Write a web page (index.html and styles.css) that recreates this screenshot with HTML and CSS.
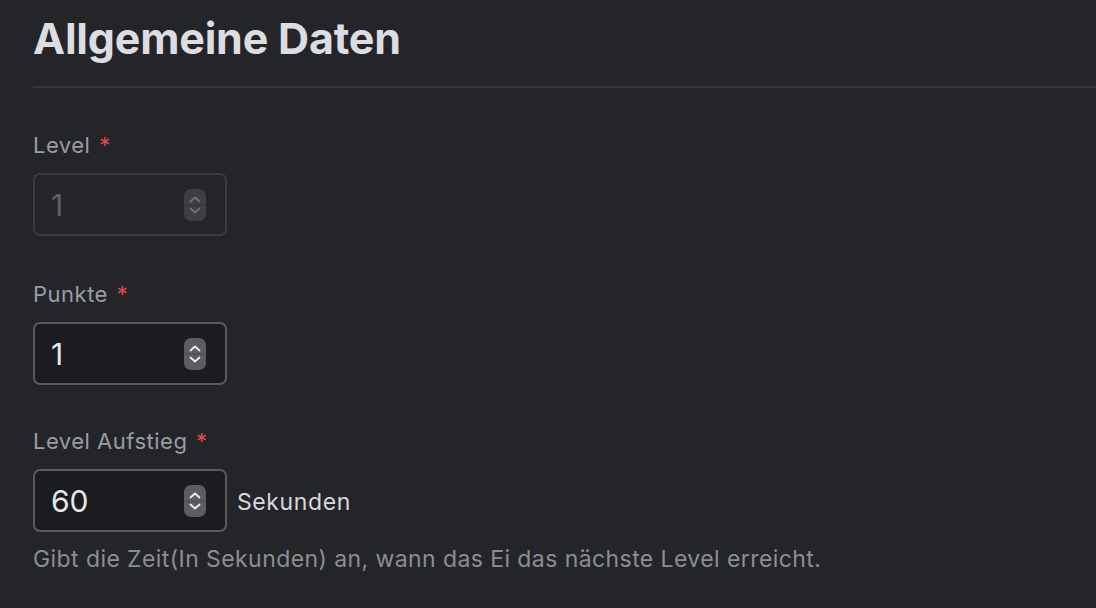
FILE: index.html
```html
<!DOCTYPE html>
<html lang="de">
<head>
    <meta charset="UTF-8">
    <meta name="viewport" content="width=device-width, initial-scale=1.0">
    <title>Allgemeine Daten</title>
    <link rel="stylesheet" href="styles.css">
</head>
<body>
    <main class="panel">
        <h1 class="panel-title">Allgemeine Daten</h1>

        <div class="field">
            <label class="field-label" for="level">Level <span class="req">*</span></label>
            <div class="field-row">
                <div class="num-input disabled">
                    <input type="number" id="level" value="1" disabled>
                    <span class="spinner">
                        <svg width="22" height="32" viewBox="0 0 22 32"><rect x="0" y="0" width="22" height="32" rx="7"/><line class="split" x1="0" y1="16" x2="22" y2="16"/><path d="M6.5 12.5 L11 8.5 L15.5 12.5 M6.5 19.5 L11 23.5 L15.5 19.5"/></svg>
                    </span>
                </div>
            </div>
        </div>

        <div class="field">
            <label class="field-label" for="punkte">Punkte <span class="req">*</span></label>
            <div class="field-row">
                <div class="num-input">
                    <input type="number" id="punkte" value="1">
                    <span class="spinner">
                        <svg width="22" height="32" viewBox="0 0 22 32"><rect x="0" y="0" width="22" height="32" rx="7"/><line class="split" x1="0" y1="16" x2="22" y2="16"/><path d="M6.5 12.5 L11 8.5 L15.5 12.5 M6.5 19.5 L11 23.5 L15.5 19.5"/></svg>
                    </span>
                </div>
            </div>
        </div>

        <div class="field">
            <label class="field-label" for="aufstieg">Level Aufstieg <span class="req">*</span></label>
            <div class="field-row">
                <div class="num-input">
                    <input type="number" id="aufstieg" value="60">
                    <span class="spinner">
                        <svg width="22" height="32" viewBox="0 0 22 32"><rect x="0" y="0" width="22" height="32" rx="7"/><line class="split" x1="0" y1="16" x2="22" y2="16"/><path d="M6.5 12.5 L11 8.5 L15.5 12.5 M6.5 19.5 L11 23.5 L15.5 19.5"/></svg>
                    </span>
                </div>
                <span class="unit">Sekunden</span>
            </div>
            <p class="help">Gibt die Zeit(In Sekunden) an, wann das Ei das nächste Level erreicht.</p>
        </div>
    </main>
</body>
</html>
```

FILE: styles.css
```css
html, body {
    margin: 0;
    padding: 0;
    background-color: #242529;
    font-family: Inter, "Noto Sans", sans-serif;
    overflow: hidden;
}

.panel {
    padding: 12px 0 0 33px;
}

.panel-title {
    margin: 0;
    padding-bottom: 22px;
    font-size: 43px;
    font-weight: 700;
    letter-spacing: -0.2px;
    line-height: 52px;
    color: #dcdde0;
    border-bottom: 2px solid #36373b;
}

.field {
    margin-top: 44px;
}

.field + .field {
    margin-top: 45px;
}

.field:last-child {
    margin-top: 43px;
}

.field-label {
    display: block;
    font-size: 22px;
    letter-spacing: 0.5px;
    line-height: 26px;
    color: #9a9da3;
    margin-bottom: 15px;
}

.req {
    color: #e5484d;
    margin-left: 2px;
}

.field-row {
    display: flex;
    align-items: center;
    gap: 10px;
}

.num-input {
    position: relative;
    width: 194px;
    height: 63px;
    box-sizing: border-box;
    border: 2px solid #5a5b60;
    border-radius: 7px;
    background-color: #1b1c1f;
}

.num-input input {
    appearance: none;
    -moz-appearance: textfield;
    width: 100%;
    height: 100%;
    box-sizing: border-box;
    border: none;
    outline: none;
    background: transparent;
    padding: 0 0 0 16px;
    font-family: Inter, "Noto Sans", sans-serif;
    font-size: 30px;
    color: #e6e7e9;
}

.num-input input::-webkit-inner-spin-button,
.num-input input::-webkit-outer-spin-button {
    -webkit-appearance: none;
    margin: 0;
}

.num-input.disabled {
    border-color: #3b3c40;
    background-color: #242529;
}

.num-input.disabled input {
    color: #5f6166;
}

.spinner {
    position: absolute;
    right: 19px;
    top: 50%;
    transform: translateY(-50%);
    display: flex;
}

.spinner rect {
    fill: #5c5d62;
}

.spinner .split {
    stroke: #4a4b50;
    stroke-width: 1;
}

.spinner path {
    fill: none;
    stroke: #eeeeef;
    stroke-width: 1.8;
    stroke-linecap: round;
    stroke-linejoin: round;
}

.num-input.disabled .spinner rect {
    fill: #3e3f44;
}

.num-input.disabled .spinner .split {
    stroke: #35363a;
}

.num-input.disabled .spinner path {
    stroke: #707277;
}

.unit {
    font-size: 23px;
    letter-spacing: 0.6px;
    color: #d6d7da;
    margin-top: 2px;
}

.help {
    margin: 13px 0 0;
    font-size: 23px;
    line-height: 28px;
    color: #8c8e93;
    letter-spacing: 0.42px;
}
```
